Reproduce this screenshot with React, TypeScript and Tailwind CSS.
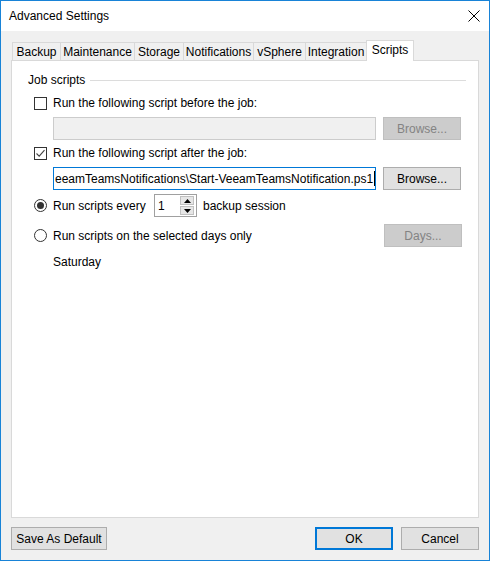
import React from "react";

const tabs = [
  { label: "Backup", w: "w-[49px]" },
  { label: "Maintenance", w: "w-[75px]" },
  { label: "Storage", w: "w-[50px]" },
  { label: "Notifications", w: "w-[71px]" },
  { label: "vSphere", w: "w-[53px]" },
  { label: "Integration", w: "w-[62px]" },
];

function Checkbox({ checked }: { checked?: boolean }) {
  return (
    <div className="w-[13px] h-[13px] border border-[#333] bg-white flex items-center justify-center shrink-0">
      {checked && (
        <svg width="11" height="11" viewBox="0 0 11 11">
          <path d="M1.5 5.5 L4.2 8.2 L9.5 2.2" fill="none" stroke="#444" strokeWidth="1.1" />
        </svg>
      )}
    </div>
  );
}

function Radio({ checked }: { checked?: boolean }) {
  return (
    <div className="w-[13px] h-[13px] rounded-full border border-[#333] bg-white flex items-center justify-center shrink-0">
      {checked && <div className="w-[7px] h-[7px] rounded-full bg-[#333]" />}
    </div>
  );
}

export default function App() {
  return (
    <div className="w-[490px] h-[561px] border border-[#1883d7] bg-[#f0f0f0] flex flex-col font-['Liberation_Sans',Arial,sans-serif] text-[12px] text-black leading-none">
      {/* title bar */}
      <div className="h-[30px] bg-white flex items-center justify-between pl-[8px] pr-[9px]">
        <span>Advanced Settings</span>
        <svg width="12" height="12" viewBox="0 0 12 12">
          <path d="M0.5 0.5 L11.5 11.5 M11.5 0.5 L0.5 11.5" stroke="#000" strokeWidth="1" />
        </svg>
      </div>

      <div className="flex-1 flex flex-col pt-[9px] px-[10px] pb-[10px]">
        {/* tabs */}
        <div className="flex items-end h-[21px] pl-[1px] -mb-px relative z-10">
          {tabs.map((t, i) => (
            <div
              key={t.label}
              className={`${t.w} h-[19px] border border-[#d9d9d9] bg-[#f0f0f0] flex items-center justify-center ${i > 0 ? "-ml-px" : ""}`}
            >
              {t.label}
            </div>
          ))}
          <div className="w-[48px] h-[21px] -ml-px border border-b-0 border-[#d9d9d9] bg-white flex items-center justify-center pb-[2px]">
            Scripts
          </div>
        </div>

        {/* panel */}
        <div className="h-[458px] border border-[#d9d9d9] bg-white flex flex-col pl-[16px] pr-[12px]">
          <div className="mt-[11px] h-[16px] flex items-center">
            <span>Job scripts</span>
            <div className="flex-1 h-px bg-[#dcdcdc] ml-[5px]" />
          </div>

          <div className="mt-[7px] h-[16px] flex items-center pl-[6px] gap-[6px]">
            <Checkbox />
            <span>Run the following script before the job:</span>
          </div>

          <div className="mt-[6px] h-[23px] flex pl-[25px] gap-[7px]">
            <div className="w-[323px] h-full border border-[#cccccc] bg-[#f0f0f0]" />
            <div className="w-[78px] h-full border border-[#bfbfbf] bg-[#cccccc] text-[#838383] flex items-center justify-center">
              Browse...
            </div>
          </div>

          <div className="mt-[5px] h-[16px] flex items-center pl-[6px] gap-[6px]">
            <Checkbox checked />
            <span>Run the following script after the job:</span>
          </div>

          <div className="mt-[6px] h-[23px] flex pl-[25px] gap-[7px]">
            <div className="w-[323px] h-full border border-[#0078d7] bg-white flex items-center overflow-hidden whitespace-nowrap pl-[1px]">
              <span>eeamTeamsNotifications\Start-VeeamTeamsNotification.ps1</span>
              <span className="w-px h-[15px] bg-black ml-[1px] shrink-0" />
            </div>
            <div className="w-[78px] h-full border border-[#adadad] bg-[#e1e1e1] flex items-center justify-center">
              Browse...
            </div>
          </div>

          <div className="mt-[4px] h-[23px] flex items-center pl-[6px]">
            <Radio checked />
            <span className="ml-[6px] w-[101px]">Run scripts every</span>
            <div className="w-[43px] h-[23px] border border-[#a0a0a0] bg-white flex items-center">
              <span className="flex-1 pl-[3px]">1</span>
              <div className="w-[14px] h-[19px] mr-[2px] flex flex-col gap-px">
                <div className="flex-1 bg-[#e6e6e6] border border-[#c0c0c0] flex items-center justify-center">
                  <svg width="7" height="4" viewBox="0 0 7 4"><path d="M3.5 0 L7 4 L0 4 Z" fill="#000" /></svg>
                </div>
                <div className="flex-1 bg-[#e6e6e6] border border-[#c0c0c0] flex items-center justify-center">
                  <svg width="7" height="4" viewBox="0 0 7 4"><path d="M0 0 L7 0 L3.5 4 Z" fill="#000" /></svg>
                </div>
              </div>
            </div>
            <span className="ml-[6px]">backup session</span>
          </div>

          <div className="mt-[7px] h-[23px] flex items-center pl-[6px]">
            <Radio />
            <span className="ml-[6px] flex-1">Run scripts on the selected days only</span>
            <div className="w-[78px] h-full mr-[4px] border border-[#bfbfbf] bg-[#cccccc] text-[#838383] flex items-center justify-center">
              Days...
            </div>
          </div>

          <div className="mt-[7px] h-[16px] flex items-center pl-[25px]">Saturday</div>
        </div>

        {/* bottom buttons */}
        <div className="mt-[9px] h-[23px] flex">
          <div className="w-[96px] h-full border border-[#adadad] bg-[#e1e1e1] flex items-center justify-center">
            Save As Default
          </div>
          <div className="flex-1" />
          <div className="w-[78px] h-full border-2 border-[#0078d7] bg-[#e1e1e1] flex items-center justify-center">
            OK
          </div>
          <div className="w-[78px] h-full ml-[8px] border border-[#adadad] bg-[#e1e1e1] flex items-center justify-center">
            Cancel
          </div>
        </div>
      </div>
    </div>
  );
}
